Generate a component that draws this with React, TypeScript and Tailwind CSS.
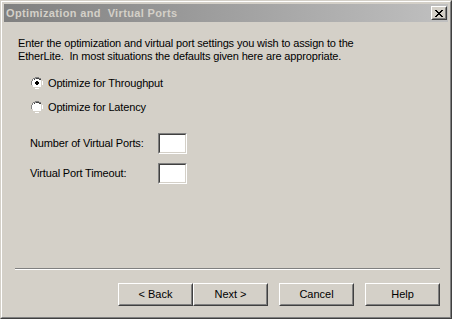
import React from 'react'

const font = { fontFamily: '"Liberation Sans", Arial, sans-serif' }

function Radio({ checked }: { checked?: boolean }) {
  return (
    <svg width="12" height="12" viewBox="0 0 12 12" className="shrink-0">
      <path d="M4 0h4v1h2v1h1v2h1v4h-1v2h-1v1h-2v1h-4v-1h-2v-1h-1v-2h-1v-4h1v-2h1v-1h2z" fill="#ffffff" />
      <path d="M4 0h4v1h2v1h-2v-1h-4v1h-2v2h-1v4h-1v-4h1v-2h1v-1h2z" fill="#808080" />
      <path d="M4 1h4v1h2v1h-2v-1h-4v1h-2v2h-1v2h-0v-2h1v-2h1v-1h2z" fill="#404040" />
      <path d="M10 2h1v2h-1zM10 8h1v2h-1zM8 10h2v1h-2zM2 10h2v1h-2zM1 8h1v2h-1zM10 4h1v4h-1zM4 10h4v1h-4z" fill="#d4d0c8" />
      {checked && <path d="M5 4h2v1h1v2h-1v1h-2v-1h-1v-2h1z" fill="#000000" />}
    </svg>
  )
}

function Field() {
  return (
    <div className="border border-t-[#808080] border-l-[#808080] border-r-white border-b-white">
      <div className="w-[27px] h-[19px] bg-white border border-t-[#404040] border-l-[#404040] border-r-[#d4d0c8] border-b-[#d4d0c8]" />
    </div>
  )
}

function Btn({ label }: { label: string }) {
  return (
    <div className="border border-t-white border-l-white border-r-[#404040] border-b-[#404040]">
      <div className="w-[73px] h-[21px] flex items-center justify-center text-[11px] text-black border border-t-[#d4d0c8] border-l-[#d4d0c8] border-r-[#808080] border-b-[#808080]">
        {label}
      </div>
    </div>
  )
}

export default function App() {
  return (
    <div className="w-[452px] h-[319px] bg-[#d4d0c8]" style={font}>
      <div className="w-full h-full border border-t-[#d4d0c8] border-l-[#d4d0c8] border-r-[#404040] border-b-[#404040]">
        <div className="w-full h-full border border-t-white border-l-white border-r-[#808080] border-b-[#808080] p-[2px] flex flex-col">
          <div className="h-[18px] flex items-center justify-between pl-[2px] pr-[1px] bg-gradient-to-r from-[#808080] to-[#c0c0c0]">
            <span className="text-[11px] font-bold text-[#d4d0c8] whitespace-pre tracking-[0.35px]">Optimization and  Virtual Ports</span>
            <div className="border border-t-white border-l-white border-r-[#404040] border-b-[#404040]">
              <div className="w-[14px] h-[12px] bg-[#d4d0c8] flex items-center justify-center border border-t-[#d4d0c8] border-l-[#d4d0c8] border-r-[#808080] border-b-[#808080]">
                <svg width="8" height="7" viewBox="0 0 8 7">
                  <path d="M0 0h2v1h1v1h2v-1h1v-1h2v1h-1v1h-1v1h-1v1h1v1h1v1h1v1h-2v-1h-1v-1h-2v1h-1v1h-2v-1h1v-1h1v-1h1v-1h-1v-1h-1v-1h-1z" fill="#000" />
                </svg>
              </div>
            </div>
          </div>
          <div className="flex-1 flex flex-col pl-[14px] pr-[8px] text-[11px] text-black">
            <p className="mt-[15px] leading-[13px] tracking-[-0.15px]">
              Enter the optimization and virtual port settings you wish to assign to the
              <br />
              EtherLite.&nbsp; In most situations the defaults given here are appropriate.
            </p>
            <div className="mt-[14px] ml-[13px] flex flex-col gap-[12px] tracking-[-0.15px]">
              <div className="flex items-center gap-[5px] h-[12px]">
                <Radio checked />
                <span>Optimize for Throughput</span>
              </div>
              <div className="flex items-center gap-[5px] h-[12px]">
                <Radio />
                <span>Optimize for Latency</span>
              </div>
            </div>
            <div className="mt-[20px] ml-[12px] flex flex-col gap-[9px] tracking-[-0.15px]">
              <div className="flex items-center">
                <span className="w-[128px]">Number of Virtual Ports:</span>
                <Field />
              </div>
              <div className="flex items-center">
                <span className="w-[128px]">Virtual Port Timeout:</span>
                <Field />
              </div>
            </div>
            <div className="mt-auto mb-[13px] ml-[-3px]">
              <div className="h-[1px] bg-[#808080]" />
              <div className="h-[1px] bg-white" />
            </div>
            <div className="flex justify-end mb-[9px]">
              <Btn label="< Back" />
              <Btn label="Next >" />
              <div className="w-[11px]" />
              <Btn label="Cancel" />
              <div className="w-[11px]" />
              <Btn label="Help" />
            </div>
          </div>
        </div>
      </div>
    </div>
  )
}
